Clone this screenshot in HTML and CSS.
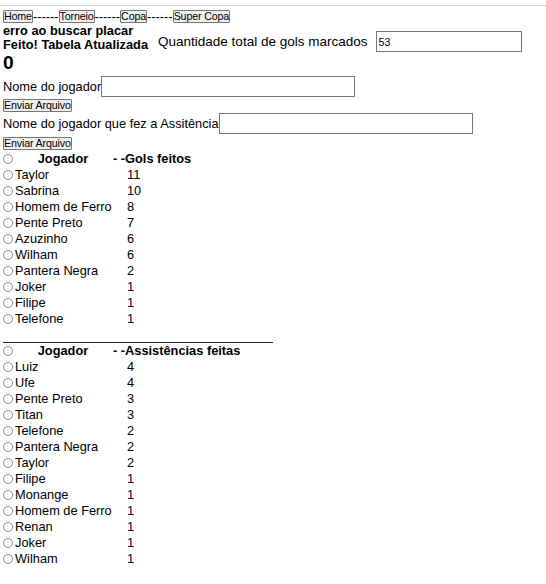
FILE: index.html
```html
<!DOCTYPE html>
<html lang="pt">
<head>
<meta charset="utf-8">
<title>Tabela</title>
<link rel="stylesheet" href="styles.css">
</head>
<body>
<div class="topline"></div>
<nav class="nav">
  <button class="btn">Home</button><span class="dash">------</span><button class="btn">Torneio</button><span class="dash">------</span><button class="btn">Copa</button><span class="dash">------</span><button class="btn">Super Copa</button>
</nav>
<div class="status-row">
  <div class="status">
    <div>erro ao buscar placar</div>
    <div>Feito! Tabela Atualizada</div>
  </div>
  <div class="total">
    <span class="total-label">Quantidade total de gols marcados</span>
    <input class="field field-small" type="text" value="53">
  </div>
</div>
<div class="zero">0</div>

<div class="form-row first"><span>Nome do jogador</span><input class="field field-wide" type="text"></div>
<button class="btn send s1">Enviar Arquivo</button>
<div class="form-row second"><span>Nome do jogador que fez a Assitência</span><input class="field field-wide" type="text"></div>
<button class="btn send s2">Enviar Arquivo</button>

<div class="table goals">
  <div class="row head"><span class="radio"></span><span class="name">Jogador</span><span class="val">- -Gols feitos</span></div>
  <div class="row"><span class="radio"></span><span class="name">Taylor</span><span class="val num">11</span></div>
  <div class="row"><span class="radio"></span><span class="name">Sabrina</span><span class="val num">10</span></div>
  <div class="row"><span class="radio"></span><span class="name">Homem de Ferro</span><span class="val num">8</span></div>
  <div class="row"><span class="radio"></span><span class="name">Pente Preto</span><span class="val num">7</span></div>
  <div class="row"><span class="radio"></span><span class="name">Azuzinho</span><span class="val num">6</span></div>
  <div class="row"><span class="radio"></span><span class="name">Wilham</span><span class="val num">6</span></div>
  <div class="row"><span class="radio"></span><span class="name">Pantera Negra</span><span class="val num">2</span></div>
  <div class="row"><span class="radio"></span><span class="name">Joker</span><span class="val num">1</span></div>
  <div class="row"><span class="radio"></span><span class="name">Filipe</span><span class="val num">1</span></div>
  <div class="row"><span class="radio"></span><span class="name">Telefone</span><span class="val num">1</span></div>
</div>

<div class="divider"></div>

<div class="table">
  <div class="row head"><span class="radio"></span><span class="name">Jogador</span><span class="val">- -Assistências feitas</span></div>
  <div class="row"><span class="radio"></span><span class="name">Luiz</span><span class="val num">4</span></div>
  <div class="row"><span class="radio"></span><span class="name">Ufe</span><span class="val num">4</span></div>
  <div class="row"><span class="radio"></span><span class="name">Pente Preto</span><span class="val num">3</span></div>
  <div class="row"><span class="radio"></span><span class="name">Titan</span><span class="val num">3</span></div>
  <div class="row"><span class="radio"></span><span class="name">Telefone</span><span class="val num">2</span></div>
  <div class="row"><span class="radio"></span><span class="name">Pantera Negra</span><span class="val num">2</span></div>
  <div class="row"><span class="radio"></span><span class="name">Taylor</span><span class="val num">2</span></div>
  <div class="row"><span class="radio"></span><span class="name">Filipe</span><span class="val num">1</span></div>
  <div class="row"><span class="radio"></span><span class="name">Monange</span><span class="val num">1</span></div>
  <div class="row"><span class="radio"></span><span class="name">Homem de Ferro</span><span class="val num">1</span></div>
  <div class="row"><span class="radio"></span><span class="name">Renan</span><span class="val num">1</span></div>
  <div class="row"><span class="radio"></span><span class="name">Joker</span><span class="val num">1</span></div>
  <div class="row"><span class="radio"></span><span class="name">Wilham</span><span class="val num">1</span></div>
</div>
</body>
</html>
```

FILE: styles.css
```css
html, body {
  margin: 0;
  padding: 0;
  background: #fff;
}
body {
  font-family: "Liberation Sans", Arial, sans-serif;
  font-size: 12.8px;
  color: #000;
  padding: 0 3px;
}
.topline {
  margin: 5px -3px 0;
  border-top: 1px solid #d3d3d3;
}
.nav {
  display: flex;
  align-items: center;
  height: 13px;
  margin-top: 4px;
}
.dash {
  font-size: 12.8px;
  line-height: 12px;
}
.btn {
  font-family: "Liberation Sans", Arial, sans-serif;
  font-size: 10.7px;
  line-height: 11px;
  height: 13px;
  padding: 0;
  margin: 0;
  background: #efefef;
  border: 1px solid #767676;
  border-radius: 1px;
  color: #000;
  display: block;
  letter-spacing: -0.15px;
}
.status-row {
  display: flex;
  align-items: flex-start;
  padding-top: 1px;
}
.status {
  font-weight: bold;
  line-height: 14px;
}
.total {
  display: flex;
  align-items: center;
  margin-top: 7px;
  margin-left: 10px;
}
.total-label {
  font-size: 13.5px;
  margin-right: 9px;
}
.field {
  box-sizing: border-box;
  height: 21px;
  border: 1px solid #767676;
  padding: 0 1px;
  margin: 0;
  font-family: "Liberation Sans", Arial, sans-serif;
  font-size: 10.67px;
  color: #000;
  background: #fff;
}
.field-small { width: 146px; }
.field-wide { width: 254px; }
.zero {
  font-size: 19.2px;
  font-weight: bold;
  line-height: 22px;
}
.form-row {
  display: flex;
  align-items: center;
  height: 21px;
}
.form-row.first { margin-top: 2px; }
.form-row.second { margin-top: 1px; }
.send.s1 { margin-top: 2px; }
.send.s2 { margin-top: 3px; }
.table {
  display: flex;
  flex-direction: column;
}
.table.goals { margin-top: 1px; }
.row {
  display: grid;
  grid-template-columns: 10px 100px auto;
  align-items: center;
  height: 16px;
  line-height: 16px;
}
.radio {
  box-sizing: border-box;
  width: 10px;
  height: 10px;
  border: 1px solid #8f8f8f;
  border-radius: 50%;
  background: #fff;
}
.name {
  padding-left: 2px;
  white-space: nowrap;
}
.head .name {
  text-align: center;
  font-weight: bold;
  padding-left: 0;
}
.head .val {
  font-weight: bold;
}
.val { white-space: nowrap; }
.val.num { padding-left: 14px; }
.divider {
  width: 270px;
  border-top: 1px solid #222;
  margin-top: 15px;
}
```
